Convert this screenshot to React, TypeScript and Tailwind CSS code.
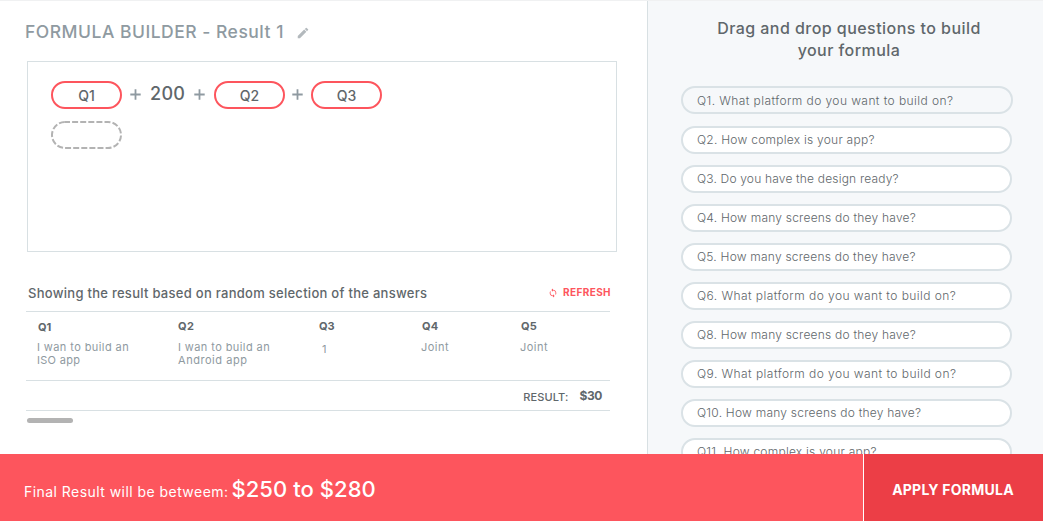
import { MdEdit, MdLoop } from "react-icons/md";

const questions = [
  { text: "Q2. How complex is your app?", tracking: "tracking-[0.25px]" },
  { text: "Q3. Do you have the design ready?", tracking: "tracking-[0.18px]" },
  { text: "Q4. How many screens do they have?", tracking: "tracking-[0.22px]" },
  { text: "Q5. How many screens do they have?", tracking: "tracking-[0.22px]" },
  { text: "Q6. What platform do you want to build on?", tracking: "tracking-[0.44px]" },
  { text: "Q8. How many screens do they have?", tracking: "tracking-[0.22px]" },
  { text: "Q9. What platform do you want to build on?", tracking: "tracking-[0.44px]" },
  { text: "Q10. How many screens do they have?", tracking: "tracking-[0.23px]" },
  { text: "Q11. How complex is your app?", tracking: "tracking-[0.24px]" },
];

function Token({ label }: { label: string }) {
  return (
    <div className="flex h-7 w-[71px] items-center justify-center rounded-full border-2 border-[#fd555d] text-[14px] font-medium text-[#5f676b]">
      {label}
    </div>
  );
}

function Plus({ className }: { className: string }) {
  return (
    <svg className={className} width="11" height="11" viewBox="0 0 11 11" aria-hidden="true">
      <path d="M5.5 0.3v10.4M0.3 5.5h10.4" stroke="#8f9aa1" strokeWidth="1.8" fill="none" />
    </svg>
  );
}

function Builder() {
  return (
    <section className="ml-[27px] h-[191px] w-[590px] border border-[#d8e0e3] pl-[23px] pt-[19px]">
      <div className="flex h-7 items-center">
        <Token label="Q1" />
        <Plus className="ml-[8px] mb-px" />
        <span className="ml-[9px] w-[36px] pb-[2px] text-[18px] leading-6 font-medium tracking-[0.33px] text-[#5f676b]">200</span>
        <Plus className="ml-[8px] mb-px" />
        <div className="ml-[9px]"><Token label="Q2" /></div>
        <Plus className="ml-[7px] mb-px" />
        <div className="ml-[8px]"><Token label="Q3" /></div>
      </div>
      <svg className="mt-3 block" width="71" height="28" viewBox="0 0 71 28" aria-hidden="true">
        <rect x="1" y="1" width="69" height="26" rx="13" fill="none" stroke="#b3b3b3" strokeWidth="2" strokeDasharray="6 2.1" strokeDashoffset="1" />
      </svg>
    </section>
  );
}

function Results() {
  return (
    <section className="ml-[26px] mt-[32px] w-[585px]">
      <div className="flex h-[27px] items-start justify-between">
        <h2 className="pl-[2px] text-[13px] leading-[19px] font-medium tracking-[0.275px] text-[#5f676b]">
          Showing the result based on random selection of the answers
        </h2>
        <button className="flex h-[17px] items-center text-[10px] font-bold tracking-[0.4px] text-[#fd555d]">
          <MdLoop className="mr-[5px] size-[10px]" />
          REFRESH
        </button>
      </div>
      <div className="grid h-[70px] w-[584px] grid-cols-[152px_141px_102px_99px_1fr] border-y border-[#d8e0e3] text-[11px] leading-[13px] text-[#8f9aa1]">
        <div className="pl-[11px] pt-[9px]">
          <div className="pl-px font-bold text-[#5f676b]">Q1</div>
          <div className="pt-[7px] tracking-[0.41px]">I wan to build an</div>
          <div className="tracking-[0.3px]">ISO app</div>
        </div>
        <div className="pt-[8px]">
          <div className="font-bold tracking-[0.5px] text-[#5f676b]">Q2</div>
          <div className="pt-[8px] tracking-[0.41px]">I wan to build an</div>
          <div className="tracking-[0.54px]">Android app</div>
        </div>
        <div className="pt-[8px]">
          <div className="font-bold text-[#5f676b]">Q3</div>
          <div className="pl-[3px] pt-[10px]">1</div>
        </div>
        <div className="pt-[8px]">
          <div className="pl-px font-bold tracking-[0.3px] text-[#5f676b]">Q4</div>
          <div className="pt-[8px] tracking-[0.46px]">Joint</div>
        </div>
        <div className="pt-[8px]">
          <div className="pl-px font-bold tracking-[0.3px] text-[#5f676b]">Q5</div>
          <div className="pt-[8px] tracking-[0.46px]">Joint</div>
        </div>
      </div>
      <div className="flex h-[30px] w-[584px] items-start justify-end border-b border-[#d8e0e3] pr-[8px] text-[#5f676b]">
        <span className="mr-[11px] pt-[8px] text-[11px] leading-4 font-medium tracking-[0.12px]">RESULT:</span>
        <span className="pt-[7px] text-[12px] leading-4 font-bold tracking-[-0.4px]">$30</span>
      </div>
      <div className="ml-px mt-[7px] h-[5px] w-[46px] rounded-full bg-[#b3b3b3]" />
    </section>
  );
}

function QuestionList() {
  return (
    <aside className="flex-1 overflow-hidden border-l border-[#d8e0e3] bg-[#f6f8fa] pl-[33px] text-[#5f676b]">
      <h2 className="mt-[16px] w-[336px] text-center text-[16px] leading-[22px] font-medium tracking-[0.45px]">
        Drag and drop questions to build
        <br />
        your formula
      </h2>
      <div className="mt-[25px] flex h-7 w-[332px] items-center rounded-full border-2 border-[#dae2e6] pt-px pl-[14px] text-[12px] font-light tracking-[0.42px]">
        Q1. What platform do you want to build on?
      </div>
      <ul className="mt-3 flex flex-col gap-[11px] text-[12px] font-light">
        {questions.map(({ text, tracking }) => (
          <li key={text} className="flex h-7 w-[331px] shrink-0 items-center rounded-full border-2 border-[#dae2e6] bg-white pl-[14px]">
            <span className={tracking}>{text}</span>
          </li>
        ))}
      </ul>
    </aside>
  );
}

export default function App() {
  return (
    <div className="flex h-[521px] w-[1043px] flex-col overflow-hidden border-t border-[#f0f1f2] bg-white font-['Inter','Liberation_Sans',sans-serif] whitespace-nowrap">
      <div className="flex h-[453px] shrink-0 overflow-hidden">
        <main className="w-[647px] shrink-0">
          <header className="flex h-[60px] items-center pl-[25px]">
            <h1 className="pt-[2px] text-[17.5px] font-medium tracking-[0.5px] text-[#8f9aa1]">FORMULA BUILDER - Result 1</h1>
            <MdEdit className="ml-[12px] mt-[4px] size-[14px] text-[#b3b9bd]" />
          </header>
          <Builder />
          <Results />
        </main>
        <QuestionList />
      </div>
      <footer className="flex h-[67px] shrink-0 text-white">
        <div className="flex flex-1 items-baseline bg-[#fd555d] pl-[24px] pt-[19px]">
          <span className="text-[14px] tracking-[0.448px]">Final Result will be betweem:</span>
          <span className="ml-[3px] text-[22px] leading-8 font-medium tracking-[0.06px]">$250 to $280</span>
        </div>
        <button className="h-full w-[180px] border-l border-white bg-[#ec3e46] pt-[4px] pr-px text-[14px] font-bold tracking-[0.23px] text-white">
          APPLY FORMULA
        </button>
      </footer>
    </div>
  );
}
